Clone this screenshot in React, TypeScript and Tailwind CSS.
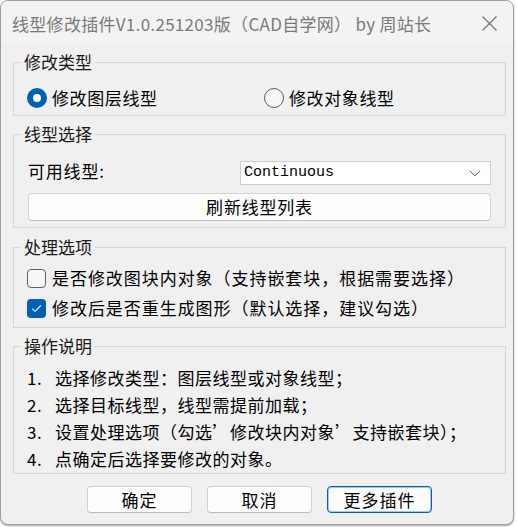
import React from "react";

const cjk = { fontFamily: '"Noto Sans CJK SC", "Noto Sans", sans-serif' };

function Legend({ children }: { children: React.ReactNode }) {
  return (
    <legend className="ml-[7px] px-[3px] text-[17px] leading-[20px] text-[#1a1a1a]">{children}</legend>
  );
}

function Radio({ checked, label }: { checked?: boolean; label: string }) {
  return (
    <div className="flex items-center gap-[5px] h-[22px]">
      {checked ? (
        <span className="w-[20px] h-[20px] rounded-full bg-[#005fb8] flex items-center justify-center">
          <span className="w-[8px] h-[8px] rounded-full bg-white" />
        </span>
      ) : (
        <span className="w-[20px] h-[20px] rounded-full border border-[#5c5c5c] bg-[#f7f7f7]" />
      )}
      <span className="text-[17px] leading-[22px] tracking-[0.6px] text-black">{label}</span>
    </div>
  );
}

function Check({ checked, label }: { checked?: boolean; label: string }) {
  return (
    <div className="flex items-center gap-[6px] h-[24px]">
      {checked ? (
        <span className="w-[19px] h-[19px] rounded-[4px] bg-[#005fb8] flex items-center justify-center">
          <svg width="11" height="9" viewBox="0 0 11 9" fill="none">
            <path d="M1.2 4.6 L4 7.3 L9.8 1.5" stroke="white" strokeWidth="1.1" />
          </svg>
        </span>
      ) : (
        <span className="w-[19px] h-[19px] rounded-[4px] border border-[#606060] bg-[#f7f7f7]" />
      )}
      <span className="text-[17px] leading-[24px] tracking-[0.95px] text-black">{label}</span>
    </div>
  );
}

function Btn({ label, primary }: { label: string; primary?: boolean }) {
  return (
    <button
      className={
        "w-[105px] h-[27px] rounded-[4px] bg-[#fdfdfd] text-[17px] leading-[25px] tracking-[1px] text-black " +
        (primary
          ? "border border-[#005fb8] shadow-[inset_0_0_0_1px_rgba(0,95,184,0.35)]"
          : "border border-[#d0d0d0] border-b-[#bdbdbd]")
      }
    >
      {label}
    </button>
  );
}

export default function App() {
  return (
    <div className="w-[517px] h-[527px] bg-white" style={cjk}>
      <div className="w-[514px] h-[525px] rounded-[8px] border border-[#9e9e9e] bg-[#f0f0f0] overflow-hidden shadow-[0_1px_2px_rgba(0,0,0,0.35)] flex flex-col">
        <div className="h-[43px] shrink-0 bg-[#f3f3f3] flex items-center justify-between pl-[11px] pr-[16px]">
          <span className="text-[17px] leading-[22px] text-[#7a7a7a] tracking-[0.3px] pt-[2px]">
            线型修改插件V1.0.251203版（CAD自学网） by 周站长
          </span>
          <svg width="15" height="15" viewBox="0 0 15 15" className="mt-[2px]">
            <path d="M0.5 0.5 L14.5 14.5 M14.5 0.5 L0.5 14.5" stroke="#707070" strokeWidth="1.1" />
          </svg>
        </div>

        <div className="flex flex-col pl-[12px] pr-[7px]">
          <fieldset className="mt-[8px] border border-[#d6d6d6] rounded-none">
            <Legend>修改类型</Legend>
            <div className="pt-[15px] pb-[6px] pl-[13px] flex">
              <div className="w-[237px]">
                <Radio checked label="修改图层线型" />
              </div>
              <Radio label="修改对象线型" />
            </div>
          </fieldset>

          <fieldset className="mt-[8px] border border-[#d6d6d6]">
            <Legend>线型选择</Legend>
            <div className="pt-[17px] pb-[6px] pl-[14px] pr-[14px] flex flex-col gap-[8px]">
              <div className="flex items-center justify-between h-[24px]">
                <span className="text-[17px] leading-[24px] tracking-[0.8px] text-black -mt-[4px]">可用线型:</span>
                <div className="w-[251px] h-[24px] bg-white border border-[#cdcdcd] flex items-center justify-between pl-[3px] pr-[9px]">
                  <span
                    className="text-[15px] leading-[22px] text-black"
                    style={{ fontFamily: '"Liberation Mono", "DejaVu Sans Mono", monospace' }}
                  >
                    Continuous
                  </span>
                  <svg width="12" height="7" viewBox="0 0 12 7" fill="none">
                    <path d="M0.8 0.8 L6 5.8 L11.2 0.8" stroke="#5a5a5a" strokeWidth="1" />
                  </svg>
                </div>
              </div>
              <button className="h-[28px] w-full rounded-[4px] bg-[#fdfdfd] border border-[#d3d3d3] border-b-[#c0c0c0] text-[17px] leading-[26px] tracking-[0.8px] text-black">
                刷新线型列表
              </button>
            </div>
          </fieldset>

          <fieldset className="mt-[9px] border border-[#d6d6d6]">
            <Legend>处理选项</Legend>
            <div className="pt-[9px] pb-[7px] pl-[13px] flex flex-col gap-[6px]">
              <Check label="是否修改图块内对象（支持嵌套块，根据需要选择）" />
              <Check checked label="修改后是否重生成图形（默认选择，建议勾选）" />
            </div>
          </fieldset>

          <fieldset className="mt-[8px] border border-[#d6d6d6]">
            <Legend>操作说明</Legend>
            <div className="pt-[8px] pb-[1px] pl-[13px] flex flex-col text-[17px] tracking-[0.5px] text-black">
              {[
                "选择修改类型：图层线型或对象线型；",
                "选择目标线型，线型需提前加载；",
                "设置处理选项（勾选’修改块内对象’支持嵌套块）；",
                "点确定后选择要修改的对象。",
              ].map((t, i) => (
                <div key={i} className="flex h-[27px] items-center">
                  <span className="w-[28px] shrink-0">{i + 1}.</span>
                  <span>{t}</span>
                </div>
              ))}
            </div>
          </fieldset>

          <div className="mt-[12px] flex justify-center gap-[15px]">
            <Btn label="确定" />
            <Btn label="取消" />
            <Btn label="更多插件" primary />
          </div>
        </div>
      </div>
    </div>
  );
}
